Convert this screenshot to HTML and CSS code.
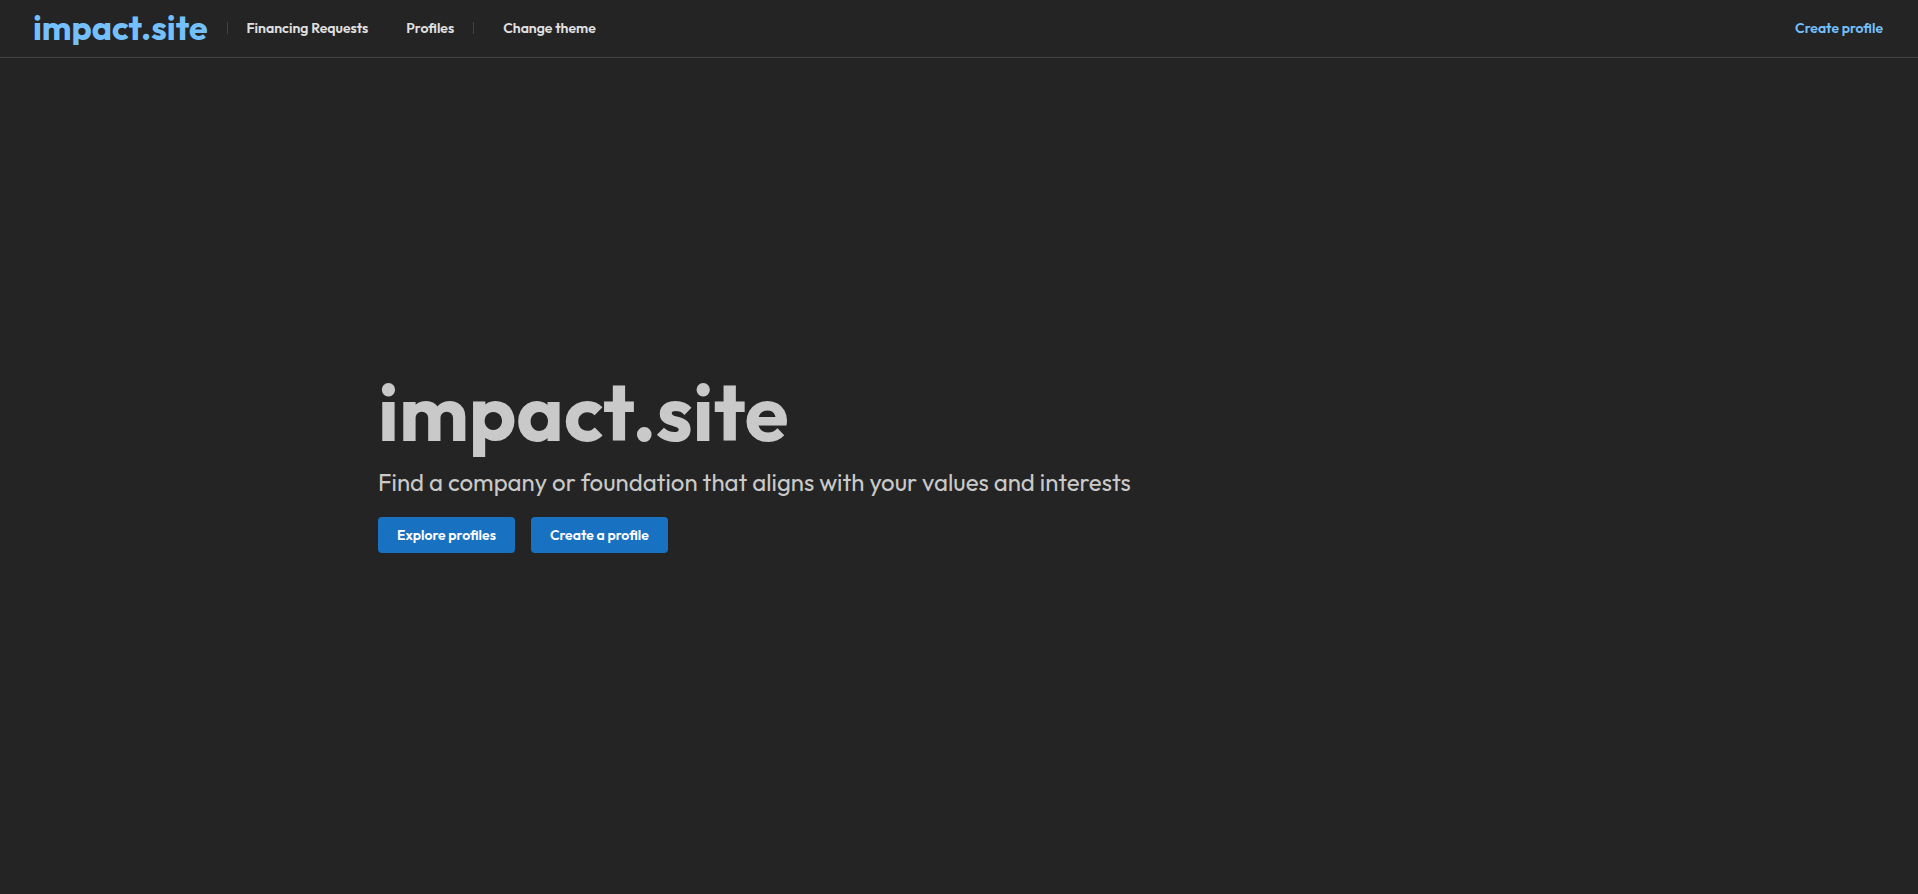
FILE: index.html
```html
<!DOCTYPE html>
<html lang="en">
<head>
<meta charset="utf-8">
<meta name="viewport" content="width=device-width, initial-scale=1">
<title>impact.site</title>
<link rel="stylesheet" href="styles.css">
</head>
<body>
<header class="header">
  <a class="logo" href="#">impact.site</a>
  <span class="divider"></span>
  <nav class="nav">
    <a class="nav-link" href="#">Financing Requests</a>
    <a class="nav-link" href="#">Profiles</a>
  </nav>
  <span class="divider"></span>
  <button class="nav-link theme" type="button">Change theme</button>
  <a class="nav-link create" href="#">Create profile</a>
</header>
<main class="main">
  <section class="hero">
    <h1 class="title">impact.site</h1>
    <p class="subtitle">Find a company or foundation that aligns with your values and interests</p>
    <div class="actions">
      <button class="button" type="button">Explore profiles</button>
      <button class="button" type="button">Create a profile</button>
    </div>
  </section>
</main>
</body>
</html>
```
FILE: styles.css
```css
* { box-sizing: border-box; }
body {
  margin: 0;
  min-height: 100vh;
  display: flex;
  flex-direction: column;
  background: #242424;
  color: #c9c9c9;
  font-family: Outfit, Lato, sans-serif;
}
.header {
  display: flex;
  align-items: center;
  min-height: 58px;
  padding: 0 35px 1px 33px;
  border-bottom: 1px solid #424242;
}
.logo {
  overflow: hidden;
  color: #74c0fc;
  font-size: 34px;
  line-height: 34px;
  font-weight: 700;
  text-decoration: none;
}
.divider {
  width: 1px;
  height: 12px;
  margin: 0 19px;
  background: #424242;
}
.nav { display: flex; gap: 38px; }
.nav-link {
  padding: 0;
  border: 0;
  background: none;
  color: #e0e0e0;
  font-family: inherit;
  font-size: 14px;
  line-height: 20px;
  font-weight: 600;
  text-decoration: none;
  white-space: nowrap;
  cursor: pointer;
}
.theme { margin-left: 10px; }
.create { margin-left: auto; color: #74c0fc; }
.main {
  flex: 1;
  display: flex;
  align-items: center;
  justify-content: center;
  padding: 0 16px 39px;
}
.hero { width: 100%; max-width: 1162px; }
.title {
  margin: 0;
  font-size: 80px;
  line-height: 104px;
  font-weight: 700;
}
.subtitle {
  margin: 0 0 16px;
  font-size: 24px;
  line-height: 37px;
}
.actions { display: flex; flex-wrap: wrap; gap: 16px; }
.button {
  height: 36px;
  padding: 0 19px;
  border: 0;
  border-radius: 4px;
  background: #1971c2;
  color: #fff;
  font-family: inherit;
  font-size: 14px;
  font-weight: 600;
  cursor: pointer;
}
```
